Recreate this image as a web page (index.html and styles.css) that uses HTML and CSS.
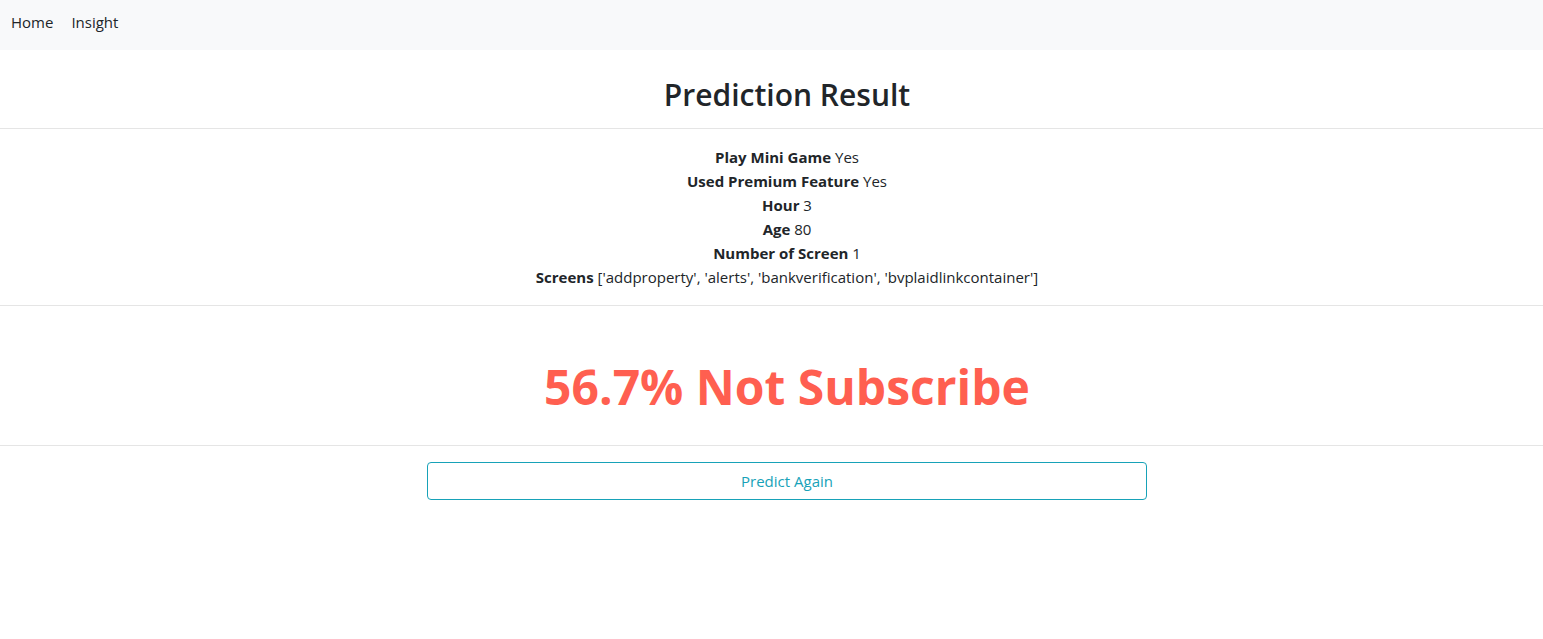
FILE: index.html
```html
<!DOCTYPE html>
<html>
<head>
<meta charset="utf-8">
<link rel="stylesheet" href="styles.css">
</head>
<body>
<nav class="navbar">
  <a class="nav-link" href="#">Home</a>
  <a class="nav-link" href="#">Insight</a>
</nav>
<main class="content">
  <h2 class="title">Prediction Result</h2>
  <hr class="rule">
  <div class="details">
    <div><b>Play Mini Game</b> Yes</div>
    <div><b>Used Premium Feature</b> Yes</div>
    <div><b>Hour</b> 3</div>
    <div><b>Age</b> 80</div>
    <div><b>Number of Screen</b> 1</div>
    <div><b>Screens</b> ['addproperty', 'alerts', 'bankverification', 'bvplaidlinkcontainer']</div>
  </div>
  <hr class="rule">
  <div class="result">56.7% Not Subscribe</div>
  <hr class="rule">
  <div class="actions">
    <a class="btn-again" href="#">Predict Again</a>
  </div>
</main>
</body>
</html>
```
FILE: styles.css
```css
html, body {
  margin: 0;
  padding: 0;
  background: #fff;
}
body {
  font-family: "Open Sans", "Noto Sans", sans-serif;
  font-size: 16px;
  line-height: 24px;
  color: #212529;
}
.navbar {
  display: flex;
  align-items: center;
  gap: 18px;
  height: 50px;
  padding: 0 11px 7px;
  box-sizing: border-box;
  background: #f8f9fa;
}
.nav-link {
  color: #212529;
  text-decoration: none;
  font-size: 15px;
}
.content {
  display: flex;
  flex-direction: column;
}
.title {
  margin: 26px 0 14px;
  font-size: 30px;
  font-weight: 600;
  line-height: 38px;
  text-align: center;
  padding-left: 31px;
}
.rule {
  margin: 0;
  border: 0;
  border-top: 1px solid #e5e5e5;
}
.details {
  padding: 16px 0 16px 31px;
  text-align: center;
  font-size: 15px;
}
.details b {
  font-weight: 700;
}
.result {
  padding: 51px 0 28px 31px;
  text-align: center;
  font-size: 48px;
  line-height: 60px;
  font-weight: 700;
  color: #ff5f50;
}
.actions {
  display: flex;
  justify-content: center;
  padding: 16px 0 0 31px;
}
.btn-again {
  display: block;
  width: 720px;
  height: 38px;
  box-sizing: border-box;
  border: 1px solid #17a2b8;
  border-radius: 4px;
  color: #17a2b8;
  text-align: center;
  line-height: 36px;
  font-size: 15px;
  text-decoration: none;
}
```
